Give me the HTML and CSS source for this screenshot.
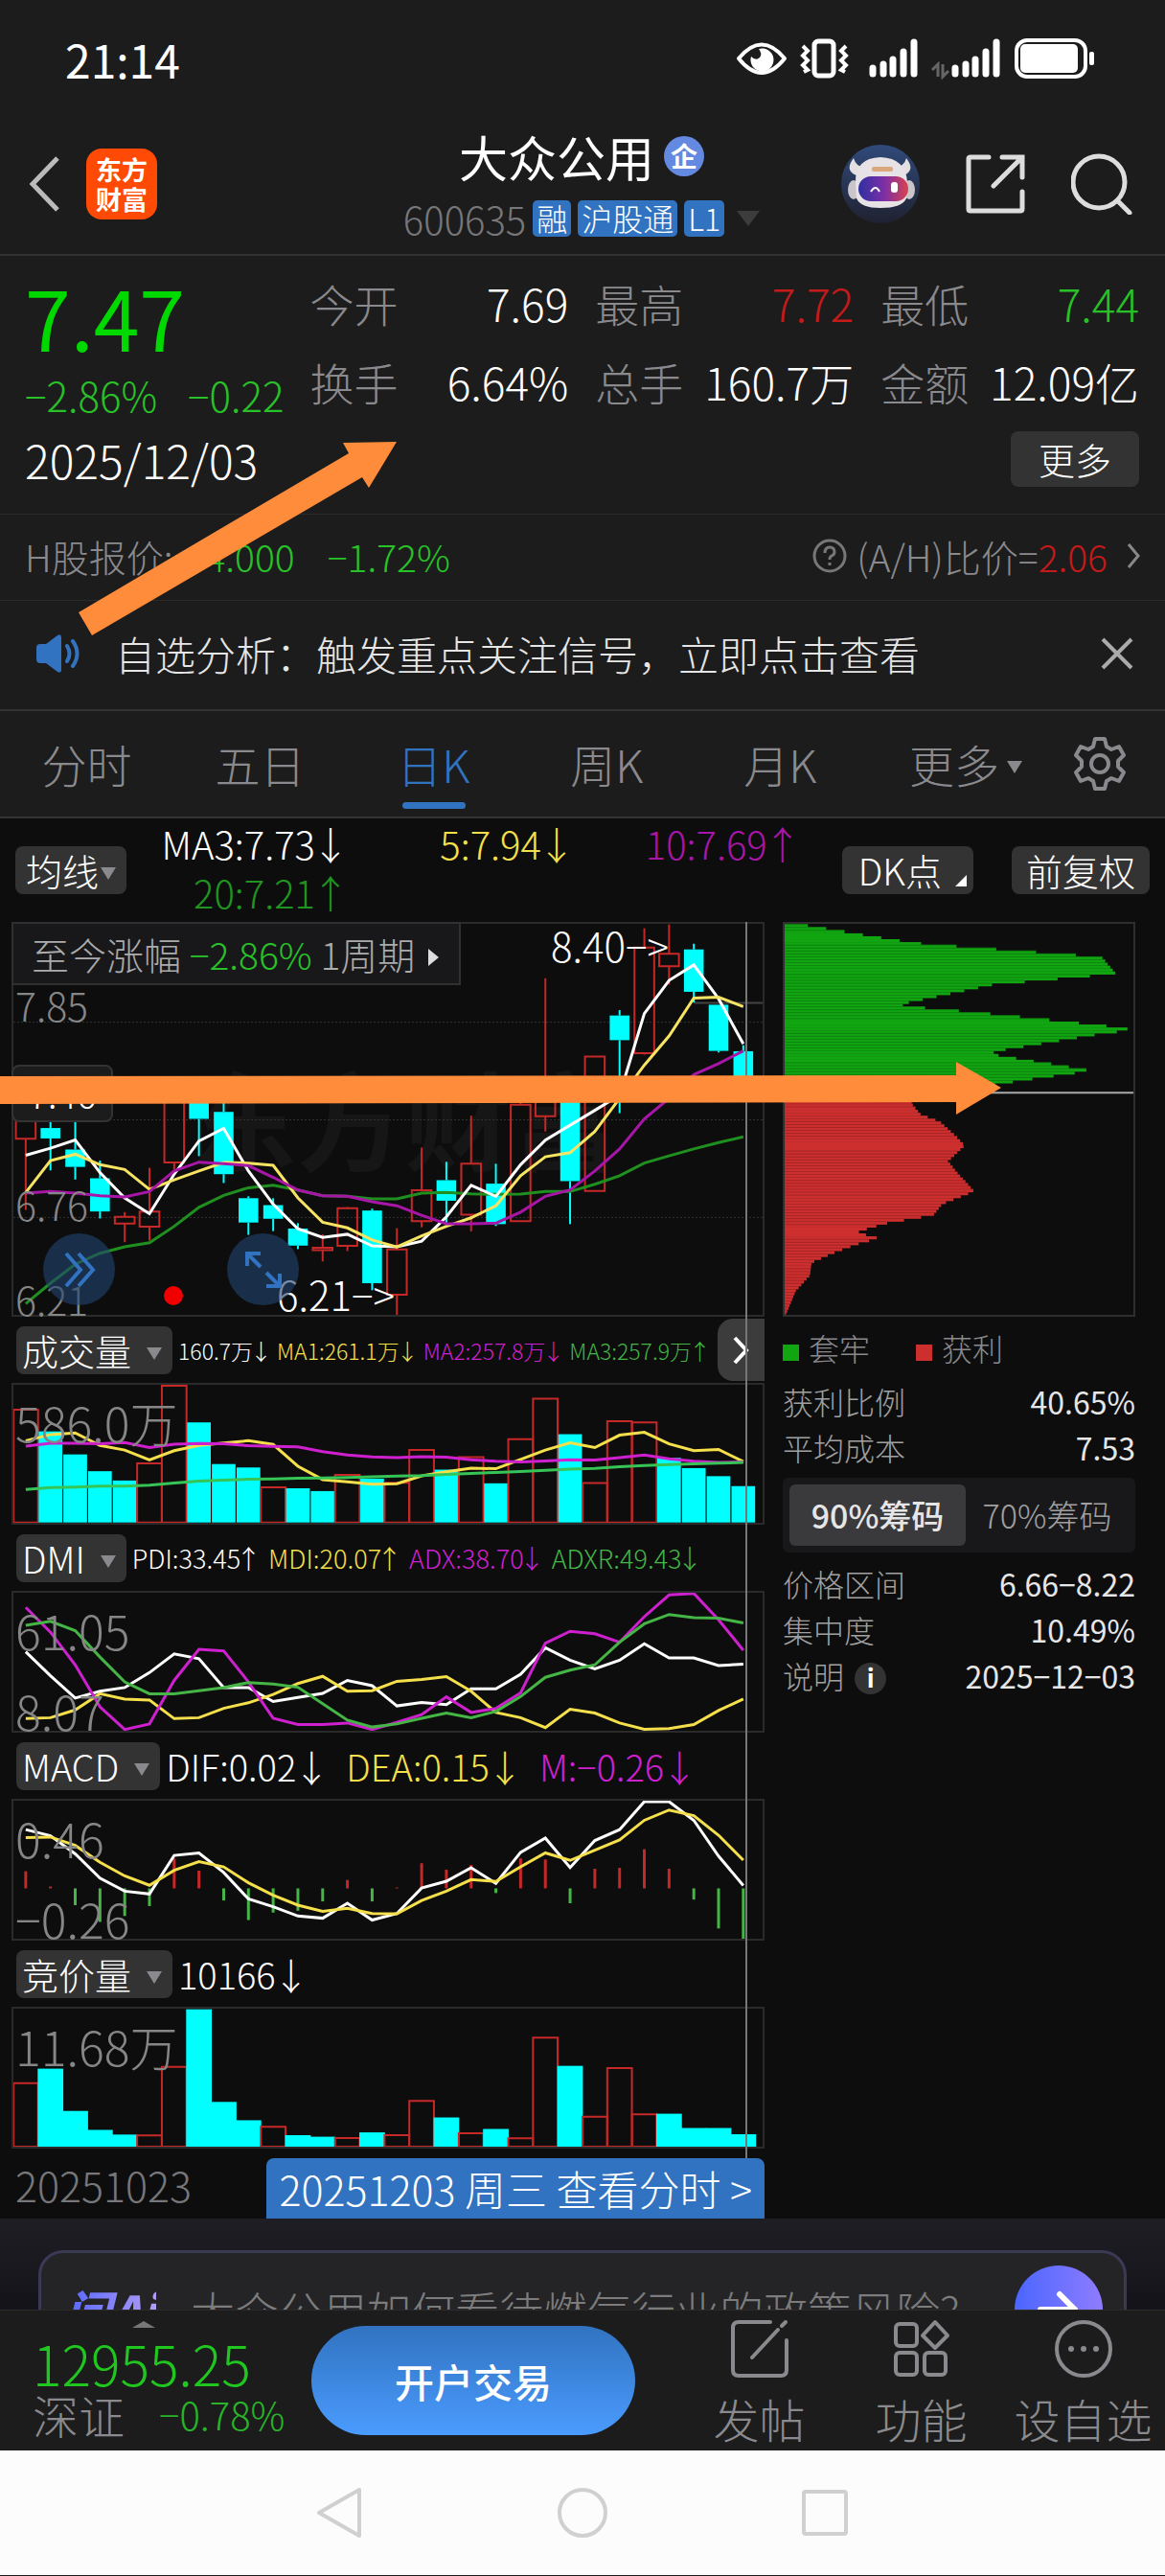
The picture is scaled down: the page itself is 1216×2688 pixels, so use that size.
FILE: index.html
```html
<!DOCTYPE html>
<html lang="zh-CN">
<head>
  <meta charset="UTF-8" />
  <meta name="viewport" content="width=device-width, initial-scale=1.0"/>
  <title>大众公用 600635</title>
  <link rel="stylesheet" href="styles.css">
</head>
<body>
<div class="page">

  <!-- Status bar -->
  <div class="status">
    <span class="clock">21:14</span>
    <svg class="status-icons" width="376" height="44" viewBox="768 39 376 44">
      <path d="M771 61Q795 32 819 61Q795 91 771 61Z" fill="none" stroke="#fff" stroke-width="4" stroke-linejoin="round"/>
      <path d="M792 51a12 12 0 1 1-8 8q5 5 9 1 3-4-1-9z" fill="#fff"/>
      <rect x="850" y="43" width="20" height="36" rx="4" fill="none" stroke="#fff" stroke-width="5"/>
      <path d="M838 48l5 5-5 5 5 5-5 5 5 5-4 2M883 48l-5 5 5 5-5 5 5 5-5 5 4 2" fill="none" stroke="#fff" stroke-width="4"/>
      <path d="M911 71v6M922 67v10M932 62v15M943 54v23M954 44v33M997 71v6M1008 67v10M1018 62v15M1029 54v23M1040 44v33" stroke="#fff" stroke-width="7" stroke-linecap="round"/>
      <path d="M973 73l6-6v13M990 74l-6 6V67" fill="none" stroke="#666" stroke-width="3"/>
      <rect x="1061" y="42" width="72" height="38" rx="11" fill="none" stroke="#fff" stroke-width="4"/>
      <rect x="1065" y="46" width="60" height="30" rx="5" fill="#fff"/>
      <rect x="1137" y="54" width="5" height="14" rx="2" fill="#fff"/>
    </svg>
  </div>

  <!-- Stock title -->
  <header class="header">
    <div class="header-left">
      <button class="icon-btn" aria-label="返回">
        <svg width="34" height="60" viewBox="0 0 34 60"><path d="M30 3L4 30l26 27" fill="none" stroke="#bbb" stroke-width="5"/></svg>
      </button>
      <span class="brand">东方<br>财富</span>
    </div>
    <div class="header-title">
      <h1>大众公用<span class="corp">企</span></h1>
      <div class="code-row">
        <span class="code">600635</span>
        <span class="tag">融</span>
        <span class="tag">沪股通</span>
        <span class="tag">L1</span>
        <i class="tri tri-dim"></i>
      </div>
    </div>
    <div class="header-right">
      <button class="icon-btn" aria-label="智能助手">
        <svg width="82" height="82" viewBox="0 0 82 82">
          <defs>
            <linearGradient id="bot-bg" x2="0" y2="1"><stop stop-color="#304a7a"/><stop offset="1" stop-color="#1f2130"/></linearGradient>
            <linearGradient id="bot-face"><stop stop-color="#2f2fa0"/><stop offset=".5" stop-color="#7a2fa8"/><stop offset="1" stop-color="#d8424f"/></linearGradient>
          </defs>
          <circle cx="41" cy="41" r="41" fill="url(#bot-bg)"/>
          <path d="M13 14q-10 13 3 18l8-8q-9-2-11-10zM68 14q10 13-3 18l-8-8q9-2 11-10z" fill="#e4e0e2"/>
          <ellipse cx="13" cy="47" rx="6" ry="10" fill="#c9c5ca"/><ellipse cx="71" cy="47" rx="6" ry="10" fill="#c9c5ca"/>
          <path d="M15 40Q14 14 41 13Q68 14 69 40L68 56Q64 66 41 66Q20 66 16 56Z" fill="#e6e2e5"/>
          <rect x="18" y="33" width="52" height="26" rx="13" fill="url(#bot-face)"/>
          <rect x="32" y="23" width="22" height="5" rx="2" fill="#dba77c"/>
          <path d="M31 49q5-8 9 0" fill="none" stroke="#fff" stroke-width="2"/>
          <rect x="52" y="39" width="7" height="11" rx="3" fill="#fff"/>
        </svg>
      </button>
      <button class="icon-btn" aria-label="分享">
        <svg width="62" height="62" viewBox="0 0 62 62"><path d="M24 3H5q-2 0-2 2v52q0 2 2 2h52q2 0 2-2V39M38 3h21v21M58 4L29 33" fill="none" stroke="#ddd" stroke-width="5" stroke-linecap="round"/></svg>
      </button>
      <button class="icon-btn" aria-label="搜索">
        <svg width="66" height="64" viewBox="0 0 66 64"><circle cx="29" cy="30" r="27" fill="none" stroke="#ddd" stroke-width="5"/><path d="M49 50l12 12" stroke="#ddd" stroke-width="5" stroke-linecap="round"/></svg>
      </button>
    </div>
  </header>

  <!-- Quote -->
  <section class="quote">
    <div class="quote-top">
      <div>
        <div class="price">7.47</div>
        <div class="change"><span>−2.86%</span><span>−0.22</span></div>
      </div>
      <dl class="stats">
        <div><dt>今开</dt><dd>7.69</dd></div>
        <div><dt>最高</dt><dd class="red">7.72</dd></div>
        <div><dt>最低</dt><dd class="green">7.44</dd></div>
        <div><dt>换手</dt><dd>6.64%</dd></div>
        <div><dt>总手</dt><dd>160.7万</dd></div>
        <div><dt>金额</dt><dd>12.09亿</dd></div>
      </dl>
    </div>
    <div class="quote-date">
      <span>2025/12/03</span>
      <button class="more-btn">更多</button>
    </div>
  </section>

  <div class="hk-row">
    <span>H股报价:</span>
    <span class="green hk-price">4.000</span>
    <span class="green hk-change">−1.72%</span>
    <svg class="hk-help" width="36" height="36" viewBox="0 0 36 36"><circle cx="18" cy="18" r="16" fill="none" stroke="#777" stroke-width="3"/><path d="M13 15q0-6 5-6t5 5q0 3-3 4-2 1-2 4M18 25v3" fill="none" stroke="#777" stroke-width="3"/></svg>
    <span>(A/H)比价=<span class="red">2.06</span></span>
    <svg class="hk-go" width="14" height="26" viewBox="0 0 14 26"><path d="M2 1l10 12L2 25" fill="none" stroke="#888" stroke-width="3"/></svg>
  </div>

  <div class="notice">
    <svg width="48" height="40" viewBox="0 0 48 40"><path d="M0 14q0-4 4-4h6L22 1q4-2 4 2v34q0 4-4 2L10 30H4q-4 0-4-4z" fill="#3173c0"/><path d="M32 12q5 8 0 16M38 7q9 13 0 26" fill="none" stroke="#3173c0" stroke-width="4" stroke-linecap="round"/></svg>
    <a href="#">自选分析：触发重点关注信号，立即点击查看</a>
    <button class="icon-btn" aria-label="关闭">
      <svg width="34" height="34" viewBox="0 0 34 34"><path d="M2 2l30 30M32 2L2 32" stroke="#aaa" stroke-width="4"/></svg>
    </button>
  </div>

  <!-- Period tabs -->
  <nav class="tabs">
    <button>分时</button>
    <button>五日</button>
    <button class="active">日K</button>
    <button>周K</button>
    <button>月K</button>
    <button>更多<i class="tri tri-small"></i></button>
    <button class="gear" aria-label="设置">
      <svg width="58" height="58" viewBox="0 0 58 58"><path d="M24 3h10l2 8 5 3 8-3 5 9-6 6v6l6 6-5 9-8-3-5 3-2 8H24l-2-8-5-3-8 3-5-9 6-6v-6l-6-6 5-9 8 3 5-3z" fill="none" stroke="#8a8a8e" stroke-width="4" stroke-linejoin="round"/><circle cx="29" cy="29" r="9" fill="none" stroke="#8a8a8e" stroke-width="4"/></svg>
    </button>
  </nav>

  <main class="charts">
    <div class="ma-bar">
      <button class="chip">均线<i class="tri tri-small"></i></button>
      <div class="ma-values">
        <span class="white">MA3:7.73<i class="arr">↓</i></span>
        <span class="yellow">5:7.94<i class="arr">↓</i></span>
        <span class="purple">10:7.69<i class="arr">↑</i></span>
        <span class="dgreen">20:7.21<i class="arr">↑</i></span>
      </div>
      <button class="chip chip-dk">DK点</button>
      <button class="chip chip-fq">前复权</button>
    </div>

    <div class="board">
      <div class="left">
        <div class="plot plot-main">
          <span class="watermark">东方财富</span>
          <svg id="kline" viewBox="0 38 1520 1237" preserveAspectRatio="none"></svg>
          <button class="gain">至今涨幅 <span class="green">−2.86%</span> 1周期<i class="tri-right"></i></button>
          <span class="lbl lbl-785">7.85</span>
          <span class="lbl lbl-676">6.76</span>
          <span class="lbl lbl-621">6.21</span>
          <span class="cursor-price">7.46</span>
          <span class="mark mark-high">8.40−&gt;</span>
          <span class="mark mark-low">6.21−&gt;</span>
          <button class="round round-next" aria-label="展开"><svg width="36" height="40" viewBox="0 0 36 40"><path d="M4 3l15 17L4 37M17 3l15 17-15 17" fill="none" stroke="#3173c0" stroke-width="4"/></svg></button>
          <button class="round round-full" aria-label="全屏"><svg width="38" height="38" viewBox="0 0 38 38"><path d="M2 15V2h14M2 2l14 14M36 23v13H22M36 36L22 22" fill="none" stroke="#3173c0" stroke-width="4"/></svg></button>
          <i class="dot"></i>
        </div>

        <div class="ind">
          <button class="chip">成交量<i class="tri"></i></button>
          <div class="vals vals-vol">
            <span class="white">160.7万<i class="arr">↓</i></span>
            <span class="yellow">MA1:261.1万<i class="arr">↓</i></span>
            <span class="magenta">MA2:257.8万<i class="arr">↓</i></span>
            <span class="lgreen">MA3:257.9万<i class="arr">↑</i></span>
          </div>
          <button class="next" aria-label="下一组"><svg width="18" height="30" viewBox="0 0 18 30"><path d="M2 2l12 13L2 28" fill="none" stroke="#fff" stroke-width="4"/></svg></button>
        </div>
        <div class="plot">
          <svg id="volume" viewBox="0 190 1520 444" preserveAspectRatio="none"></svg>
          <span class="lbl lbl-top">586.0万</span>
        </div>

        <div class="ind">
          <button class="chip">DMI<i class="tri"></i></button>
          <div class="vals vals-dmi">
            <span class="white">PDI:33.45<i class="arr">↑</i></span>
            <span class="yellow">MDI:20.07<i class="arr">↑</i></span>
            <span class="magenta">ADX:38.70<i class="arr">↓</i></span>
            <span class="lgreen">ADXR:49.43<i class="arr">↓</i></span>
          </div>
        </div>
        <div class="plot">
          <svg id="dmi" viewBox="0 843 1520 444" preserveAspectRatio="none"></svg>
          <span class="lbl lbl-top">61.05</span>
          <span class="lbl lbl-bottom">8.07</span>
        </div>

        <div class="ind">
          <button class="chip">MACD<i class="tri"></i></button>
          <div class="vals">
            <span class="white">DIF:0.02<i class="arr">↓</i></span>
            <span class="yellow">DEA:0.15<i class="arr">↓</i></span>
            <span class="magenta">M:−0.26<i class="arr">↓</i></span>
          </div>
        </div>
        <div class="plot">
          <svg id="macd" viewBox="0 234 1520 444" preserveAspectRatio="none"></svg>
          <span class="lbl lbl-top">0.46</span>
          <span class="lbl lbl-bottom">−0.26</span>
        </div>

        <div class="ind">
          <button class="chip">竞价量<i class="tri"></i></button>
          <div class="vals"><span class="white">10166<i class="arr">↓</i></span></div>
        </div>
        <div class="plot">
          <svg id="auction" viewBox="0 193 1520 444" preserveAspectRatio="none"></svg>
          <span class="lbl lbl-top">11.68万</span>
        </div>
        <i class="crosshair"></i>

        <div class="date-row">
          <span>20251023</span>
          <button>20251203 周三 查看分时 &gt;</button>
        </div>
      </div>

      <!-- Chip distribution -->
      <aside class="chips">
        <svg id="chips" viewBox="0 70 1102 1236" preserveAspectRatio="none"></svg>
        <div class="legend">
          <span><i class="sq sq-green"></i>套牢</span>
          <span><i class="sq sq-red"></i>获利</span>
        </div>
        <dl class="facts">
          <div><dt>获利比例</dt><dd>40.65%</dd></div>
          <div><dt>平均成本</dt><dd>7.53</dd></div>
        </dl>
        <div class="seg">
          <button class="on">90%筹码</button>
          <button>70%筹码</button>
        </div>
        <dl class="facts">
          <div><dt>价格区间</dt><dd>6.66−8.22</dd></div>
          <div><dt>集中度</dt><dd>10.49%</dd></div>
          <div><dt>说明 <i class="info">i</i></dt><dd>2025−12−03</dd></div>
        </dl>
      </aside>
    </div>
  </main>

  <section class="ask">
    <a class="ask-card" href="#">
      <b class="ask-logo">问Ai</b>
      <span class="ask-text">大众公用如何看待燃气行业的政策风险?</span>
      <span class="ask-go"><svg width="46" height="40" viewBox="0 0 46 40"><path d="M4 20h36M24 4l16 16-16 16" fill="none" stroke="#fff" stroke-width="6" stroke-linecap="round" stroke-linejoin="round"/></svg></span>
    </a>
  </section>

  <!-- Bottom actions -->
  <footer class="bottom">
    <div class="index">
      <i class="tri-up"></i>
      <div class="index-value">12955.25</div>
      <div class="index-row"><span>深证</span><span class="index-change">−0.78%</span></div>
    </div>
    <button class="trade">开户交易</button>
    <button class="act">
      <svg width="62" height="62" viewBox="0 0 62 62"><path d="M42 3H9Q3 3 3 9v44q0 6 6 6h44q6 0 6-6V22M23 40L50 11M54 7l4-4" fill="none" stroke="#8a8a8e" stroke-width="4" stroke-linecap="round"/></svg>
      发帖
    </button>
    <button class="act">
      <svg width="62" height="62" viewBox="0 0 62 62"><g fill="none" stroke="#8a8a8e" stroke-width="4"><rect x="4" y="5" width="22" height="23" rx="4"/><rect x="4" y="35" width="22" height="23" rx="4"/><rect x="34" y="35" width="22" height="23" rx="4"/><path d="M45 3l13 14-13 13-13-13z" stroke-linejoin="round"/></g></svg>
      功能
    </button>
    <button class="act">
      <svg width="62" height="62" viewBox="0 0 62 62"><circle cx="31" cy="31" r="28" fill="none" stroke="#8a8a8e" stroke-width="4"/><g fill="#8a8a8e"><circle cx="18" cy="31" r="3"/><circle cx="31" cy="31" r="3"/><circle cx="44" cy="31" r="3"/></g></svg>
      设自选
    </button>
  </footer>

  <div class="sysnav">
    <svg width="54" height="54" viewBox="0 0 54 54"><path d="M47 3v48L5 27z"/></svg>
    <svg width="54" height="54" viewBox="0 0 54 54"><circle cx="27" cy="27" r="24"/></svg>
    <svg width="54" height="54" viewBox="0 0 54 54"><rect x="5" y="5" width="44" height="44" rx="2"/></svg>
  </div>

  <!-- Hand-drawn arrows on top of everything -->
  <svg class="arrows" viewBox="0 0 1216 1200">
    <path d="M414 461L358 462L364 473L82 639L96 663L378 498L385 509Z"/>
    <path d="M0 1123L998 1122V1108L1045 1135L998 1163V1150L0 1152Z"/>
  </svg>
</div>
<script src="charts.js"></script>
</body>
</html>
```
FILE: styles.css
```css
* {
  box-sizing: border-box;
}
body {
  margin: 0;
  background: #1c1c1c;
  color: #fff;
  font-family: "Noto Sans CJK SC", "Liberation Sans", sans-serif;
  font-weight: 300;
}
.page {
  position: relative;
}
button {
  font: inherit;
  color: inherit;
  background: none;
  border: none;
  padding: 0;
  margin: 0;
  cursor: pointer;
}
a {
  color: inherit;
  text-decoration: none;
}
svg {
  display: block;
  flex: none;
}
i {
  font-style: normal;
}
dl, dd, h1 {
  margin: 0;
}

/* Colours */
.white { color: #fff; }
.red { color: #c41a1a; }
.green { color: #28c128; }
.dgreen { color: #1f9420; }
.lgreen { color: #45b545; }
.yellow { color: #f5e04c; }
.purple { color: #a816a8; }
.magenta { color: #cf20cf; }

/* Small triangles */
.tri {
  display: inline-block;
  border: 8px solid transparent;
  border-top: 13px solid #8a8a8e;
  border-bottom: 0;
}
.tri-dim {
  border-width: 16px 12px 0;
  border-top-color: #3c3c3c;
  margin-left: 6px;
}
.tri-small {
  margin-left: 2px;
}
.tri-right {
  display: inline-block;
  border-left: 11px solid #ddd;
  border-top: 9px solid transparent;
  border-bottom: 9px solid transparent;
  margin-left: 14px;
  vertical-align: 4px;
}
.tri-up {
  position: absolute;
  top: 11px;
  left: 138px;
  border-bottom: 7px solid #777;
  border-left: 12px solid transparent;
  border-right: 12px solid transparent;
}
/* The arrow glyph is full width, its box is not */
.arr {
  display: inline-flex;
  justify-content: center;
  width: 32px;
}

/* Status bar */
.status {
  display: flex;
  justify-content: space-between;
  align-items: center;
  height: 105px;
  padding: 16px 72px 0 68px;
}
.clock {
  font-size: 48px;
  font-weight: 400;
  line-height: 60px;
}

/* Header */
.header {
  display: grid;
  grid-template-columns: 1fr auto 1fr;
  align-items: center;
  padding: 29px 32px 15px 30px;
  border-bottom: 2px solid #333;
}
.header-left,
.header-right {
  display: flex;
  align-items: center;
}
.header-left {
  gap: 26px;
}
.header-right {
  justify-content: flex-end;
  gap: 48px;
}
.brand {
  width: 74px;
  height: 74px;
  padding: 6px 0;
  border-radius: 16px;
  background: #ff4a05;
  font-size: 27px;
  font-weight: 700;
  line-height: 31px;
  text-align: center;
}
h1 {
  display: flex;
  align-items: center;
  justify-content: center;
  gap: 10px;
  font-size: 51px;
  font-weight: 400;
  line-height: 58px;
}
.corp {
  width: 42px;
  height: 42px;
  border-radius: 50%;
  background: #6489e0;
  font-size: 28px;
  font-weight: 700;
  line-height: 40px;
  text-align: center;
}
.code-row {
  display: flex;
  align-items: center;
  gap: 7px;
  margin-top: 14px;
  height: 44px;
}
.code {
  font-size: 40px;
  line-height: 44px;
  color: #77777a;
}
.tag {
  height: 38px;
  padding: 0 4px;
  border-radius: 5px;
  background: #3173c0;
  font-size: 32px;
  line-height: 36px;
}

/* Quote */
.quote {
  padding: 8px 27px 27px 26px;
  border-bottom: 1px solid #2b2b2b;
}
.quote-top {
  display: grid;
  grid-template-columns: 297fr 864fr;
}
.price {
  font-size: 86px;
  font-weight: 400;
  line-height: 110px;
  color: #00d900;
}
.change {
  display: flex;
  gap: 32px;
  font-size: 42px;
  line-height: 54px;
  color: #28c128;
}
.stats {
  display: grid;
  grid-template-columns: repeat(3, 1fr);
  column-gap: 28px;
}
.stats div {
  display: flex;
  justify-content: space-between;
  font-size: 46px;
  line-height: 82px;
  white-space: nowrap;
}
dt {
  color: #8a8a8e;
}
.quote-date {
  display: flex;
  justify-content: space-between;
  align-items: center;
  margin-top: 10px;
  font-size: 48px;
  line-height: 60px;
}
.more-btn {
  padding: 0 29px;
  border-radius: 8px;
  background: #333;
  font-size: 38px;
  line-height: 58px;
}

.hk-row {
  display: flex;
  align-items: center;
  padding: 0 26px 3px;
  font-size: 39px;
  line-height: 86px;
  color: #8a8a8e;
  border-bottom: 1px solid #2b2b2b;
}
.hk-price {
  margin-left: 34px;
}
.hk-change {
  margin-left: 34px;
}
.hk-help {
  margin: 0 10px 0 auto;
}
.hk-go {
  margin-left: 20px;
}

.notice {
  display: flex;
  align-items: center;
  padding: 0 33px 3px 38px;
  font-size: 42px;
  line-height: 110px;
  color: #e6e6e6;
  border-bottom: 2px solid #333;
}
.notice a {
  margin-left: 34px;
  flex: 1;
}

/* Tabs */
.tabs {
  display: grid;
  grid-template-columns: repeat(5, 181fr) 206fr 105fr;
  font-size: 47px;
  line-height: 110px;
  color: #8a8a8e;
  border-bottom: 2px solid #333;
}
.tabs button {
  position: relative;
}
.tabs .active {
  color: #3173c0;
}
.tabs .active::after {
  content: "";
  position: absolute;
  left: 50%;
  bottom: 8px;
  width: 66px;
  height: 7px;
  margin-left: -33px;
  border-radius: 4px;
  background: #3173c0;
}
.tabs .tri {
  margin-left: 8px;
  vertical-align: 10px;
}
.tabs .gear {
  padding-left: 8px;
}

/* Charts */
.charts {
  background: #0d0d0d;
}
.ma-bar {
  display: flex;
  align-items: center;
  padding: 0 16px;
  height: 108px;
}
.chip {
  padding: 0 11px;
  border-radius: 8px;
  background: #333;
  font-size: 38px;
  line-height: 50px;
  white-space: nowrap;
}
.chip .tri {
  margin-left: 16px;
  vertical-align: 6px;
}
.chip .tri-small {
  margin-left: 2px;
}
.ma-values {
  flex: 1;
  display: grid;
  grid-template-columns: 200px 1fr 1fr;
  margin: 0 46px 4px 29px;
  font-size: 40px;
  line-height: 51px;
  text-align: right;
}
.chip-dk {
  position: relative;
  padding: 0 33px 0 17px;
}
.chip-dk::after {
  content: "";
  position: absolute;
  right: 7px;
  bottom: 8px;
  border-left: 12px solid transparent;
  border-bottom: 12px solid #fff;
}
.chip-fq {
  padding: 0 15px;
  margin-left: 40px;
}
.board {
  display: grid;
  grid-template-columns: minmax(0, 786fr) minmax(0, 368fr);
  column-gap: 19px;
  padding: 0 31px 0 12px;
}
.left {
  position: relative;
}
.plot {
  position: relative;
  height: 148px;
  border: 2px solid #2a2a2a;
}
.plot svg[id] {
  width: 100%;
  height: 100%;
  position: relative;
}
.plot-main {
  height: 412px;
}
.lbl {
  position: absolute;
  left: 2px;
  line-height: 48px;
  font-size: 50px;
  color: #868686;
}
.lbl-top { top: 14px; }
.lbl-bottom { top: 98px; }
.plot-main .lbl { font-size: 41px; }
.lbl-785 { top: 60px; }
.lbl-676 { top: 268px; }
.lbl-621 { top: 367px; }
.watermark {
  position: absolute;
  top: 145px;
  left: 184px;
  font-size: 112px;
  font-weight: 700;
  line-height: 112px;
  color: #161616;
}
.gain {
  position: absolute;
  top: -2px;
  left: -2px;
  width: 469px;
  padding-left: 19px;
  border: 2px solid #303030;
  background: #18181a;
  font-size: 39px;
  line-height: 62px;
  color: #ababab;
  text-align: left;
  white-space: nowrap;
}
.cursor-price {
  position: absolute;
  top: 147px;
  left: -2px;
  width: 106px;
  border: 2px solid #333;
  border-radius: 8px;
  background: #1c1c1c;
  font-size: 38px;
  line-height: 56px;
  text-align: center;
}
.mark {
  position: absolute;
  font-size: 42px;
  line-height: 48px;
}
.mark-high { top: -2px; left: 561px; }
.mark-low { top: 362px; left: 275px; }
.round {
  position: absolute;
  top: 323px;
  display: flex;
  align-items: center;
  justify-content: center;
  width: 75px;
  height: 75px;
  border-radius: 50%;
  background: rgba(34, 68, 112, 0.6);
}
.round-next { left: 31px; }
.round-full { left: 223px; }
.dot {
  position: absolute;
  top: 378px;
  left: 157px;
  width: 20px;
  height: 20px;
  border-radius: 50%;
  background: #f00000;
}
.crosshair {
  position: absolute;
  top: 0;
  bottom: 63px;
  left: 97.4%;
  width: 2px;
  background: #777;
}

/* Indicator titles */
.ind {
  display: flex;
  align-items: center;
  height: 69px;
  padding-left: 5px;
}
.ind .chip {
  padding: 0 11px 0 6px;
}
.vals {
  display: flex;
  flex: 1;
  gap: 20px;
  margin-left: 6px;
  font-size: 38px;
  white-space: nowrap;
}
.vals-vol {
  gap: 8px;
  font-size: 23px;
}
.vals-dmi {
  gap: 12px;
  font-size: 27px;
}
.vals-vol .arr,
.vals-dmi .arr {
  width: 17px;
}
.next {
  display: flex;
  align-items: center;
  justify-content: center;
  width: 49px;
  height: 65px;
  border-radius: 16px 0 0 16px;
  background: #3c3c3c;
}

.date-row {
  display: flex;
  justify-content: space-between;
  margin-top: 10px;
  font-size: 43px;
  line-height: 54px;
  color: #77777a;
}
.date-row span {
  padding-left: 4px;
}
.date-row button {
  padding: 0 13px;
  border-radius: 8px 8px 0 0;
  background: #3173c0;
  color: #fff;
  line-height: 63px;
}

/* Chip distribution */
.chips svg {
  width: 100%;
  height: 412px;
  border: 2px solid #2f2f2f;
}
.legend {
  display: flex;
  gap: 48px;
  font-size: 32px;
  line-height: 64px;
  color: #8a8a8e;
}
.sq {
  display: inline-block;
  width: 17px;
  height: 17px;
  margin-right: 10px;
}
.sq-green { background: #12a512; }
.sq-red { background: #cd2f2f; }
.facts div {
  display: flex;
  justify-content: space-between;
  font-size: 32px;
  line-height: 48px;
}
.facts dt {
  color: #a0a0a0;
}
.facts dd {
  font-weight: 400;
  color: #e6e6e6;
}
.seg {
  display: grid;
  grid-template-columns: 184fr 170fr;
  margin: 8px 0;
  padding: 7px;
  border-radius: 6px;
  background: #18181a;
  font-size: 34px;
  line-height: 64px;
  color: #a0a0a0;
}
.seg .on {
  border-radius: 6px;
  background: #3a3a3c;
  color: #e6e6e6;
  font-weight: 500;
}
.info {
  display: inline-block;
  width: 33px;
  height: 33px;
  margin-left: 4px;
  border-radius: 50%;
  background: #333;
  color: #fff;
  font-size: 26px;
  font-weight: 700;
  line-height: 30px;
  text-align: center;
  vertical-align: 1px;
}

/* AI question */
.ask {
  height: 95px;
  padding: 33px 40px 0;
  background: linear-gradient(#1f1e25, #14131a);
  overflow: hidden;
}
.ask-card {
  display: flex;
  align-items: center;
  height: 124px;
  padding: 0 22px 0 25px;
  border: 3px solid #3a3a55;
  border-radius: 26px;
  background: #242426;
}
.ask-logo {
  font-size: 48px;
  font-weight: 900;
  font-style: italic;
  background: linear-gradient(90deg, #5566ff, #b09cf5);
  background-clip: text;
  color: transparent;
}
.ask-text {
  flex: 1;
  margin-left: 36px;
  font-size: 46px;
  color: #7c7c7c;
  white-space: nowrap;
}
.ask-go {
  display: flex;
  align-items: center;
  justify-content: center;
  width: 92px;
  height: 92px;
  border-radius: 50%;
  background: linear-gradient(90deg, #4a66ff, #8f7cff);
}

/* Bottom bar */
.bottom {
  position: relative;
  display: grid;
  grid-template-columns: 325fr 338fr 45fr 169fr 169fr 169fr 1fr;
  align-items: center;
  height: 147px;
  border-top: 1px solid #2b2b2b;
  color: #8a8a8e;
  font-size: 48px;
}
.index {
  padding: 10px 0 0 34px;
}
.index-value {
  font-size: 57px;
  line-height: 60px;
  color: #1fc71f;
}
.index-row {
  display: flex;
  gap: 36px;
  line-height: 48px;
}
.index-change {
  font-size: 40px;
  color: #28b428;
}
.trade {
  height: 114px;
  border-radius: 57px;
  background: linear-gradient(#3173c0, #4a9bff);
  color: #fff;
  font-size: 41px;
  font-weight: 500;
}
.act {
  padding-top: 6px;
  line-height: 62px;
  white-space: nowrap;
}
.act svg {
  margin: 0 auto 10px;
}
.trade + .act {
  grid-column: 4;
}

/* Android keys */
.sysnav {
  display: flex;
  justify-content: center;
  align-items: center;
  gap: 199px;
  height: 130px;
  background: #fcfcfc;
}
.sysnav svg {
  fill: none;
  stroke: #d0d0d0;
  stroke-width: 4;
  stroke-linejoin: round;
}

.arrows {
  position: absolute;
  top: 0;
  left: 0;
  width: 100%;
  fill: #ff8c3a;
  pointer-events: none;
}
```
FILE: charts.js
```js
const STEP = 50.2;
const CYAN = '#00ffff', RED = '#c62828', WHITE = '#ffffff', YELLOW = '#f5e04c';
const MAGENTA = '#cf20cf', GREEN = '#45b545';

function px(i) {
  return 25 + STEP * i;
}

function add(svg, tag, attrs) {
  const el = document.createElementNS('http://www.w3.org/2000/svg', tag);
  for (const k in attrs) el.setAttribute(k, attrs[k]);
  el.setAttribute('vector-effect', 'non-scaling-stroke');
  svg.appendChild(el);
}

function line(svg, ys, color) {
  const points = ys.map((y, i) => px(i) + ',' + y).join(' ');
  add(svg, 'polyline', { points, fill: 'none', stroke: color, 'stroke-width': 3 });
}

function seg(svg, x1, y1, x2, y2, color, width, dash) {
  const attrs = { x1, y1, x2, y2, stroke: color, 'stroke-width': width };
  if (dash) attrs['stroke-dasharray'] = dash;
  add(svg, 'line', attrs);
}

function box(svg, x, y, w, h, up) {
  if (up) add(svg, 'rect', { x, y, width: w, height: h, fill: 'none', stroke: RED, 'stroke-width': 2 });
  else add(svg, 'rect', { x, y, width: w, height: h, fill: CYAN });
}

// K line: [up, body top, body bottom, high, low]
const kline = document.getElementById('kline');
[349, 658, 967].forEach(y => seg(kline, 0, y, 1520, y, '#333', 1, '2 2'));
seg(kline, 1381, 288, 1520, 288, '#444', 2);
[
  [1, 600, 718, 600, 943], [0, 684, 717, 655, 818], [0, 752, 807, 640, 847], [0, 843, 948, 787, 970],
  [1, 965, 986, 950, 1045], [1, 948, 996, 810, 1040], [1, 590, 793, 560, 815], [0, 560, 655, 560, 773],
  [0, 633, 830, 600, 858], [0, 906, 983, 900, 1022], [0, 928, 971, 906, 1010], [0, 1002, 1056, 985, 1067],
  [1, 1063, 1070, 1020, 1106], [1, 938, 1057, 934, 1073], [0, 945, 1175, 939, 1197], [1, 1068, 1211, 1001, 1275],
  [1, 881, 979, 746, 998], [0, 849, 914, 791, 985], [1, 797, 958, 645, 1011], [0, 860, 988, 797, 994],
  [1, 610, 979, 560, 979], [1, 560, 647, 210, 695], [0, 540, 852, 540, 988], [1, 458, 883, 458, 883],
  [0, 328, 406, 311, 637], [1, 113, 447, 52, 452], [1, 133, 172, 40, 230], [0, 119, 253, 101, 287],
  [0, 294, 440, 294, 445], [0, 441, 560, 422, 560]
].forEach(([up, top, bottom, high, low], i) => {
  const color = up ? RED : CYAN;
  seg(kline, px(i), high, px(i), top, color, 2);
  seg(kline, px(i), bottom, px(i), low, color, 2);
  box(kline, px(i) - 20, top, 40, bottom - top, up);
});
line(kline, [1240, 1175, 1115, 1080, 1060, 1047, 995, 935, 897, 873, 865, 880, 898, 900, 908, 908, 890, 888, 892, 894, 893, 885, 885, 862, 835, 795, 772, 750, 730, 712], '#1f8f1f');
line(kline, [770, 748, 722, 825, 905, 955, 830, 725, 685, 820, 925, 1003, 1030, 1020, 1057, 1060, 1042, 965, 865, 900, 800, 722, 675, 628, 580, 322, 217, 168, 275, 418], WHITE);
line(kline, [888, 787, 767, 800, 815, 878, 848, 820, 793, 795, 802, 905, 982, 1000, 1038, 1060, 1025, 995, 968, 930, 835, 775, 762, 695, 590, 485, 393, 273, 270, 300], '#f8e463');
line(kline, [890, 885, 890, 898, 902, 885, 820, 792, 797, 803, 840, 880, 898, 900, 917, 930, 960, 987, 987, 985, 950, 900, 880, 820, 750, 655, 590, 515, 480, 440], '#a816a8');

// Bars from the bottom of the plot: [up, top]
function bars(svg, data, bottom, gap) {
  data.forEach(([up, top], i) => {
    const pad = up ? 0 : gap;
    box(svg, px(i) - 25 + pad, top, 50 - pad * 2, bottom - top, up);
  });
}

const volume = document.getElementById('volume');
bars(volume, [[1, 270], [0, 340], [0, 414], [0, 468], [0, 498], [1, 443], [1, 193], [0, 311], [0, 445], [0, 456],
  [1, 520], [0, 523], [0, 532], [1, 480], [0, 492], [1, 505], [1, 400], [0, 463], [1, 423], [0, 507],
  [1, 365], [1, 235], [0, 349], [1, 506], [1, 307], [1, 311], [0, 425], [0, 458], [0, 484], [0, 516]], 633, 1);
line(volume, [370, 350, 345, 385, 400, 432, 402, 385, 377, 370, 382, 452, 495, 502, 510, 508, 483, 470, 458, 460, 430, 400, 377, 392, 352, 343, 380, 402, 398, 437], YELLOW);
line(volume, [387, 378, 378, 380, 376, 392, 381, 379, 380, 386, 388, 390, 405, 416, 422, 424, 421, 423, 431, 436, 438, 435, 431, 432, 424, 416, 428, 436, 440, 438], MAGENTA);
line(volume, [527, 521, 519, 516, 516, 513, 506, 500, 497, 494, 493, 491, 490, 488, 486, 484, 482, 478, 475, 472, 469, 465, 461, 459, 454, 450, 447, 444, 442, 440], '#35c455');

const dmi = document.getElementById('dmi');
line(dmi, [1033, 1110, 1182, 1160, 1148, 1100, 1040, 1055, 1148, 1148, 1193, 1180, 1167, 1125, 1142, 1207, 1196, 1203, 1152, 1152, 1105, 1020, 1060, 1088, 1060, 1007, 1053, 1053, 1077, 1073], WHITE);
line(dmi, [1248, 1245, 1220, 1168, 1185, 1188, 1248, 1245, 1215, 1197, 1170, 1135, 1112, 1160, 1158, 1128, 1122, 1113, 1160, 1228, 1245, 1277, 1218, 1230, 1262, 1282, 1280, 1267, 1222, 1185], YELLOW);
line(dmi, [890, 970, 1075, 1210, 1283, 1265, 1125, 1025, 1030, 1130, 1247, 1267, 1267, 1262, 1283, 1260, 1235, 1178, 1228, 1215, 1165, 1005, 967, 975, 1002, 920, 850, 845, 930, 1028], MAGENTA);
line(dmi, [948, 935, 965, 1050, 1130, 1168, 1168, 1158, 1148, 1132, 1137, 1147, 1200, 1253, 1275, 1265, 1247, 1230, 1245, 1225, 1177, 1115, 1092, 1075, 1002, 943, 913, 923, 925, 940], GREEN);

const macd = document.getElementById('macd');
const zero = 516;
[461, 510, 570, 624, 605, 573, 420, 459, 555, 618, 594, 588, 558, 489, 558, 513, 435, 456, 441, 531, 420, 423, 564, 453, 450, 390, 453, 552, 645, 678]
  .forEach((y, i) => seg(macd, px(i), zero, px(i), y, y < zero ? RED : GREEN, 3));
line(macd, [327, 347, 405, 483, 525, 534, 410, 402, 465, 550, 575, 605, 612, 564, 618, 597, 515, 493, 450, 500, 400, 354, 449, 362, 327, 237, 237, 297, 412, 507], WHITE);
line(macd, [353, 351, 378, 432, 476, 506, 458, 430, 447, 498, 538, 570, 590, 580, 597, 598, 555, 525, 488, 494, 447, 402, 426, 393, 360, 297, 264, 282, 345, 425], YELLOW);

bars(document.getElementById('auction'), [[1, 433], [0, 386], [0, 522], [0, 583], [0, 598], [1, 601], [1, 380], [0, 195], [0, 493], [0, 552],
  [1, 573], [0, 600], [0, 605], [1, 609], [0, 591], [1, 600], [1, 490], [0, 543], [1, 594], [0, 580],
  [1, 610], [1, 286], [0, 377], [1, 541], [1, 384], [1, 533], [0, 531], [0, 577], [0, 577], [0, 597]], 637, -1);

// Chip distribution outline: [y, width], one bar every 9 units
const chips = document.getElementById('chips');
const outline = [[72, 48], [130, 410], [140, 528], [175, 1001], [190, 1015], [226, 1046], [236, 945], [262, 655],
  [320, 382], [330, 370], [350, 600], [390, 1001], [404, 1101], [420, 980], [468, 690], [480, 645], [534, 967],
  [560, 780], [575, 680], [603, 560], [604, 500], [635, 398], [672, 430], [695, 490], [750, 550], [770, 569],
  [820, 516], [850, 540], [915, 598], [955, 498], [990, 470], [1000, 412], [1015, 325], [1030, 270], [1045, 230],
  [1063, 295], [1080, 235], [1105, 165], [1140, 85], [1180, 80], [1230, 35], [1306, 3]];
function widthAt(y) {
  for (let i = 1; i < outline.length; i++) {
    const [y0, w0] = outline[i - 1], [y1, w1] = outline[i];
    if (y <= y1) return w0 + (w1 - w0) * (y - y0) / (y1 - y0);
  }
  return 0;
}
for (let y = 72, n = 0; y < 1300; y += 9.3, n++) {
  const w = widthAt(y + 4), top = y < 600;
  add(chips, 'rect', { x: 0, y, width: w, height: 9.6, fill: top ? '#12a512' : '#cd2f2f' });
  if (n % 10 > 6 || n % 10 < 3) seg(chips, 0, y, w, y, top ? '#0d860f' : '#a82626', 1);
}
seg(chips, 0, 604, 1102, 604, '#aaa', 2);
```
